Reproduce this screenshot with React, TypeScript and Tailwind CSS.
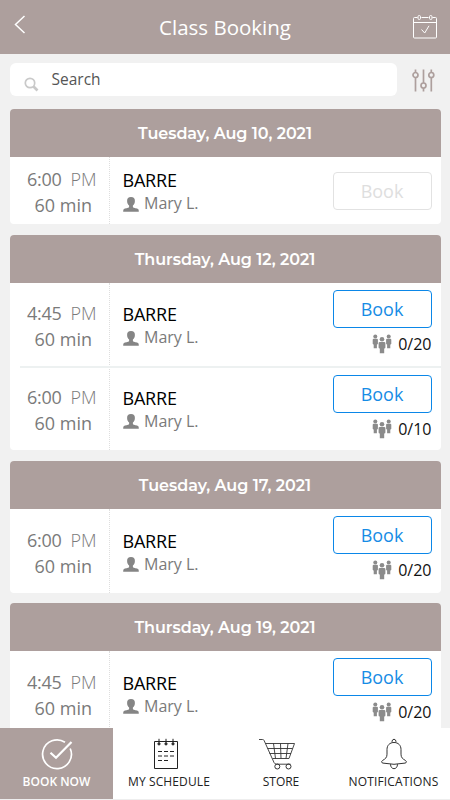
import React from "react";

type Session = { time: string; meridiem: string; count?: string };
type Day = { date: string; spacing: string; sessions: Session[] };

const days: Day[] = [
  { date: "Tuesday, Aug 10, 2021", spacing: "h-[115px] mb-[11px]", sessions: [{ time: "6:00", meridiem: "PM" }] },
  {
    date: "Thursday, Aug 12, 2021",
    spacing: "h-[215px] mb-[11px]",
    sessions: [
      { time: "4:45", meridiem: "PM", count: "0/20" },
      { time: "6:00", meridiem: "PM", count: "0/10" },
    ],
  },
  { date: "Tuesday, Aug 17, 2021", spacing: "h-[132px] mb-[10px]", sessions: [{ time: "6:00", meridiem: "PM", count: "0/20" }] },
  { date: "Thursday, Aug 19, 2021", spacing: "h-[132px]", sessions: [{ time: "4:45", meridiem: "PM", count: "0/20" }] },
];

function PersonIcon() {
  return (
    <svg className="mt-[2px] h-[15px] w-[16px] shrink-0" viewBox="0 0 16 15" fill="#858585">
      <path d="M8 0C5.300 0 4 1.500 4.100 4c0 2 .8 3.500 2 4.600v1.700C5.300 11.300 1.800 11.200.7 12.200.2 12.800.2 14 .2 14.700h15.600c0-.7 0-1.900-.5-2.500-1.100-1-4.600-.9-5.400-1.900V8.600c1.200-1.100 2-2.600 2-4.600C12 1.500 10.700 0 8 0Z" />
    </svg>
  );
}

function GroupIcon() {
  return (
    <svg className="h-[20px] w-[20px]" viewBox="0 0 20 20" fill="#8b8b8b">
      <circle cx="3.300" cy="2.400" r="2" />
      <path d="M1.700 4.700h3.200q1 0 1 1v4.100q0 .8-1 .8v3.600H1.700v-3.600q-1 0-1-.8V5.700q0-1 1-1Z" />
      <circle cx="16.700" cy="2.400" r="2" />
      <path d="M15.100 4.700h3.200q1 0 1 1v4.100q0 .8-1 .8v3.600h-3.200v-3.600q-1 0-1-.8V5.700q0-1 1-1Z" />
      <circle cx="10" cy="5.200" r="2.300" />
      <path d="M7.900 8h4.200q1.300 0 1.300 1.100v4.400q0 1-1.200 1v4.800H7.800v-4.800q-1.200 0-1.200-1V9.100Q6.600 8 7.900 8Z" />
    </svg>
  );
}

function CalendarCheckIcon() {
  return (
    <svg className="h-[24px] w-[24px]" viewBox="0 0 24 24" fill="none" stroke="white" strokeWidth="1">
      <path d="M4.500 2.500H1.500q-1 0-1 1V22q0 1 1 1H22.500q1 0 1-1V3.500q0-1-1-1H19.500M8.500 2.500h7M.5 7.500h23M8.500 14.500l3.200 3.500L16 10.800" />
      <rect x="5" y=".5" width="2.500" height="4" rx="1.200" />
      <rect x="16.500" y=".5" width="2.500" height="4" rx="1.200" />
    </svg>
  );
}

function SlidersIcon() {
  return (
    <svg className="h-[23px] w-[23px]" viewBox="0 0 23 23" fill="none" stroke="#ad9f9d" strokeWidth="1.700">
      <path d="M3.500 .5V3.500M3.500 8.500V22.500M11.500 .5V14M11.500 19V22.500M19.300 .5V3.500M19.300 8.500V22.500" />
      <circle cx="3.500" cy="6" r="2.500" />
      <circle cx="11.500" cy="16.500" r="2.500" />
      <circle cx="19.300" cy="6" r="2.500" />
    </svg>
  );
}

function BookIcon() {
  return (
    <svg className="h-[32px] w-[32px]" viewBox="0 0 32 32" fill="none" stroke="white" strokeWidth="1.700">
      <path d="M24 4.300A14.400 14.400 0 1 0 29.200 10.500" />
      <path d="M9.500 14.700l5.500 5L30.500 4" strokeWidth="2.200" />
    </svg>
  );
}

function ScheduleIcon() {
  return (
    <svg className="-ml-[6px] h-[32px] w-[26px]" viewBox="0 0 26 32" fill="none" stroke="#222">
      <path d="M1.500 3.500h23v27h-23Z" />
      <path d="M6 .8v4M13 .8v4M20 .8v4" />
      <circle cx="6" cy="5.900" r="1.100" fill="#444" />
      <circle cx="13" cy="5.900" r="1.100" fill="#444" />
      <circle cx="20" cy="5.900" r="1.100" fill="#444" />
      <path d="M5 13.500h4M11 13.500h4M17 13.500h4M5 18h4M11 18h4M17 18h4M5 22.500h4M11 22.500h4" />
    </svg>
  );
}

function CartIcon() {
  return (
    <svg className="-ml-[8px] h-[32px] w-[38px]" viewBox="0 0 38 32" fill="none" stroke="#333" strokeWidth="1">
      <path d="M1 1.500h3.500q1.200 0 1.600 1L16 24.500q.8 1.700 2.500 1.700H32.500M7.500 5.500H36.500L31 20.500H14.500M9.500 10.500H34.500M11.500 15.500H33M15.500 5.500L17.500 20.500M22.500 5.500L23 20.500M30 5.500L28 20.500" strokeWidth=".9" />
      <circle cx="19.300" cy="28.500" r="2.500" />
      <circle cx="30.500" cy="28.500" r="2.500" />
    </svg>
  );
}

function BellIcon() {
  return (
    <svg className="h-[32px] w-[28px]" viewBox="0 0 28 32" fill="none" stroke="#333" strokeWidth="1">
      <path d="M14 4.500C9.500 4.500 7 7.500 7 11.500v4.700C7 19.500 5.500 20.800 2.500 22.500c-1.500 1.400-1.200 2.100.5 2.600Q14 27.500 25 25.100c1.700-.5 2-1.200.5-2.600C22.500 20.800 21 19.500 21 16.200v-4.700c0-4-2.500-7-7-7Z" />
      <path d="M12.700 4.600a1.900 1.900 0 1 1 2.600 0M10.500 26.200c0 6 7 6 7 0" />
    </svg>
  );
}

function SessionRow({ session, divided }: { session: Session; divided: boolean }) {
  return (
    <div className="relative flex min-h-0 flex-1">
      {divided && <div className="absolute top-[-1px] right-0 left-[10px] h-[2px] bg-[#edf1f1]" />}
      <div className="flex w-[100px] shrink-0 flex-col items-end justify-center border-r border-dotted border-[#dedede] pt-[3px] text-[18px] leading-[26px] text-[#7a7a7a]">
        <div className="flex pr-[12px]">
          <span className="tracking-[-0.300px]">{session.time}</span>
          <span className="ml-[9px] font-light">{session.meridiem}</span>
        </div>
        <div className="pr-[16.500px]">60 min</div>
      </div>
      <div className="flex flex-1 flex-col justify-center pt-[2px] pl-[13px]">
        <div className="text-[18px] leading-[23px] tracking-[-0.200px] text-black">BARRE</div>
        <div className="flex items-center gap-[5.500px] text-[16px] leading-[22px] text-[#7a7a7a]">
          <PersonIcon />
          <span>Mary L.</span>
        </div>
      </div>
      <div
        className={
          session.count
            ? divided
              ? "flex w-[99px] mr-[9px] flex-col pt-[8.500px]"
              : "flex w-[99px] mr-[9px] flex-col pt-[7px]"
            : "flex w-[99px] mr-[9px] flex-col justify-center"
        }
      >
        <button
          className={
            session.count
              ? "h-[38px] shrink-0 rounded-[4px] border border-[#0b87e8] text-[18px] leading-[37px] text-[#168ce5]"
              : "h-[38px] shrink-0 rounded-[4px] border-[1.500px] border-[#e2e2e2] text-[18px] leading-[37px] text-[#dedede]"
          }
        >
          Book
        </button>
        {session.count && (
          <div className="mt-[6px] flex h-[20px] items-center justify-end gap-[6px] text-[16px] leading-[20px] text-[#111]">
            <GroupIcon />
            <span>{session.count}</span>
          </div>
        )}
      </div>
    </div>
  );
}

const tabs = [
  { label: "BOOK NOW", icon: <BookIcon />, style: "bg-[#ad9f9d] text-white font-semibold" },
  { label: "MY SCHEDULE", icon: <ScheduleIcon />, style: "text-[#222] tracking-[0.120px]" },
  { label: "STORE", icon: <CartIcon />, style: "text-[#222]" },
  { label: "NOTIFICATIONS", icon: <BellIcon />, style: "text-[#222] tracking-[0.150px]" },
];

export default function App() {
  return (
    <div className="flex h-[800px] w-[450px] flex-col overflow-hidden bg-[#f1f1f1] font-['Open_Sans',sans-serif]">
      <header className="grid h-[54px] shrink-0 grid-cols-[60px_1fr_60px] items-center bg-[#ad9f9d] text-white">
        <svg className="mb-[5px] ml-[14px] h-[19px] w-[12px]" viewBox="0 0 12 19" fill="none" stroke="white" strokeWidth="1.500">
          <path d="M10.500 1L1.500 9.500L10.500 18" />
        </svg>
        <h1 className="text-center text-[20.500px] leading-[54px]">Class Booking</h1>
        <div className="ml-[23px]">
          <CalendarCheckIcon />
        </div>
      </header>
      <div className="flex h-[55px] shrink-0 items-start pt-[9px] pl-[10px]">
        <div className="flex h-[33px] w-[387px] items-center rounded-[6px] bg-white">
          <svg className="mt-[9px] ml-[14px] h-[15px] w-[15px]" viewBox="0 0 15 15" fill="none" stroke="#c9c9c9" strokeWidth="1.700">
            <circle cx="6" cy="6" r="4.700" />
            <path d="M9.500 9.500L13.500 13.500" strokeWidth="2.600" />
          </svg>
          <span className="ml-[12.500px] text-[15.500px] text-[#555]">Search</span>
        </div>
        <div className="mt-[6px] ml-[15px]">
          <SlidersIcon />
        </div>
      </div>
      <main className="min-h-0 flex-1 overflow-hidden px-[9.500px]">
        {days.map((day) => (
          <section key={day.date} className={"flex w-[431px] flex-col overflow-hidden rounded-[4px] bg-white " + day.spacing}>
            <h2 className="h-[48px] shrink-0 bg-[#ad9f9d] text-center font-['Montserrat',Inter,sans-serif] text-[16px] leading-[49px] font-semibold tracking-[-0.040px] text-white">
              {day.date}
            </h2>
            {day.sessions.map((session, index) => (
              <SessionRow key={session.time} session={session} divided={index > 0} />
            ))}
          </section>
        ))}
      </main>
      <nav className="grid h-[72px] shrink-0 grid-cols-[113px_112px_112px_113px] border-b border-[#eee] bg-white">
        {tabs.map((tab) => (
          <div key={tab.label} className={"flex flex-col items-center pt-[10px] text-[12px] whitespace-nowrap " + tab.style}>
            {tab.icon}
            <span className="mt-[3px] leading-[17px]">{tab.label}</span>
          </div>
        ))}
      </nav>
    </div>
  );
}
